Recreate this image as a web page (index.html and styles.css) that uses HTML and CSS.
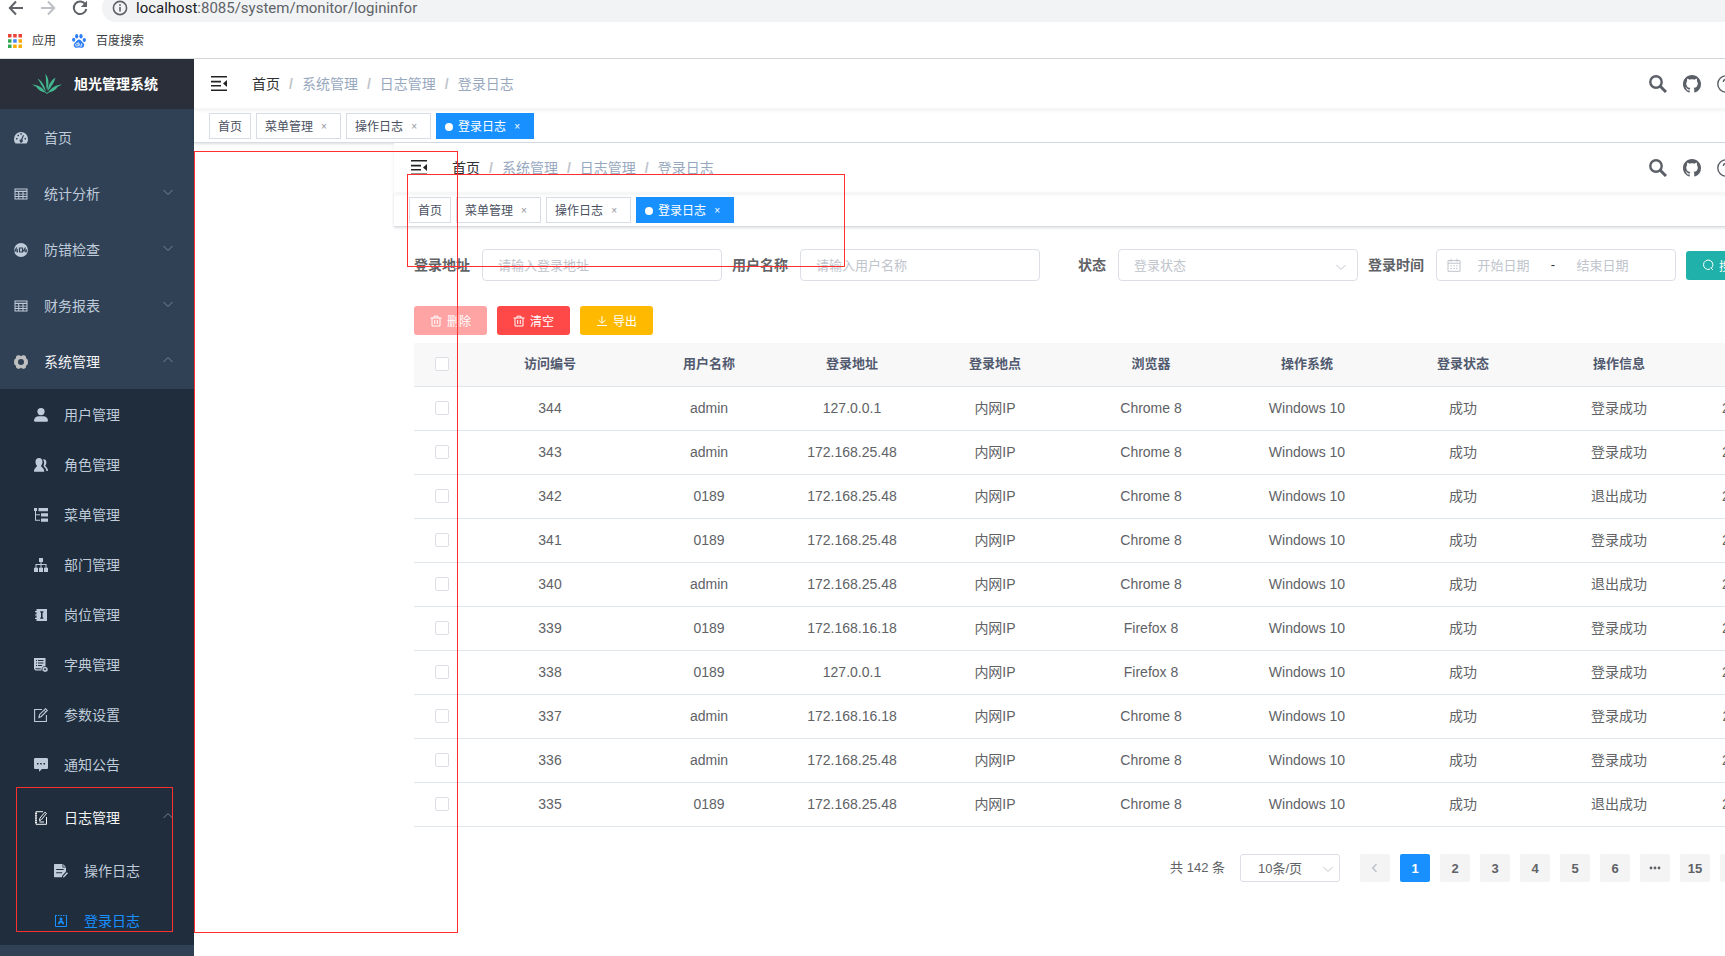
FILE: index.html
```
<!DOCTYPE html>
<html lang="zh-CN">
<head>
    <meta charset="utf-8">
    <title>旭光管理系统</title>
    <link rel="stylesheet" href="styles.css">
</head>
<body>
    <!-- icon set -->
    <svg class="icon-defs" width="0" height="0">
        <symbol id="i-dashboard" viewBox="0 0 14 14"><path fill-rule="evenodd" d="M7 1a7 7 0 0 0-7 7c0 1.800.5 3.200 1.500 4.500h11C13.500 11.200 14 9.800 14 8a7 7 0 0 0-7-7zM2 7h1.500v1.500H2zM3.500 3.700H5v1.500H3.500zM6.300 2.300h1.500v1.500H6.300zM10.500 7H12v1.500h-1.500zM9 4l1 .5-1.700 4.200a1.600 1.600 0 1 1-1.200-.4z"/></symbol>
        <symbol id="i-table" viewBox="0 0 14 14"><path fill-rule="evenodd" d="M.5 1.500h13v11H.5zM1.500 2.500v1.200h11V2.500zM1.500 5v1.700h2.700V5zM5.200 5v1.700h3.300V5zM9.500 5v1.700h3V5zM1.500 7.500v1.600h2.700V7.500zM5.200 7.500v1.600h3.300V7.500zM9.500 7.500v1.600h3V7.500zM1.500 10v1.500h2.700V10zM5.200 10v1.500h3.300V10zM9.500 10v1.500h3V10z"/></symbol>
        <symbol id="i-404" viewBox="0 0 14 14"><circle cx="7" cy="7" r="6.900"/><path d="M2.800 4.500L.8 8h3M3.300 6v3.500M5.500 5h3v4h-3zM11.500 4.500l-2 3.500h3.500M12 6v3.500" fill="none" stroke="#304156" stroke-width="1.200"/></symbol>
        <symbol id="i-system" viewBox="0 0 14 14"><path fill-rule="evenodd" d="M3.800.3h1.600L7 1.200 8.600.3h1.600l1.600 1 .3 1.900 1.500 1.300.4 2.500-.4 2.500-1.500 1.300-.3 1.900-1.600 1H8.600L7 12.800l-1.600.9H3.800l-1.600-1-.3-1.900L.4 9.500 0 7l.4-2.500 1.500-1.300.3-1.900zM7 4a3 3 0 1 0 0 6 3 3 0 0 0 0-6z"/></symbol>
        <symbol id="i-user" viewBox="0 0 14 14"><circle cx="7" cy="3.600" r="3.600"/><path d="M0 12.200C.4 9.500 2.500 8.300 4.500 8.300h5c2 0 4.100 1.200 4.500 3.900 0 1-.7 1.500-2 1.500H2c-1.300 0-2-.5-2-1.500z"/></symbol>
        <symbol id="i-peoples" viewBox="0 0 14 14"><path d="M5 0c2.200 0 3.500 1.600 3.500 3.800 0 1.600-.6 3-1.500 3.900 0 1.300 3.300 2 3.300 6.100H0c0-4.100 3-4.800 3-6.100-1-.9-1.500-2.300-1.500-3.900C1.500 1.600 2.800 0 5 0z"/><path d="M9 1.300c2-.3 3.400 1 3.400 3 0 1.400-.5 2.500-1.200 3.300 0 1.200 2.800 1.800 2.800 5.300h-1.600c-.2-2.600-2.700-3.600-2.900-5.300.9-1.700 1-4.200-.5-6.300z"/></symbol>
        <symbol id="i-tree-table" viewBox="0 0 14 14"><path d="M0 0h3v3H0zM4.500 0H14v3.200H4.500zM7 5.200h7v3.200H7zM7 10.500h7v3.300H7z"/><path d="M1 3h1v9.800H1zM1 6.300h5v1H1zM1 11.800h5v1H1z"/></symbol>
        <symbol id="i-tree" viewBox="0 0 14 14"><path d="M5 0h4v4H5zM6.500 4h1v2h-1zM1.500 6h11v1h-11zM1.500 6h1v4h-1zM6.500 6h1v4h-1zM11.500 6h1v4h-1zM0 9.700h4v4.200H0zM5 9.700h4v4.200H5zM10 9.700h4v4.200h-4z"/></symbol>
        <symbol id="i-post" viewBox="0 0 14 14"><path fill-rule="evenodd" d="M2.500 1H13v12H2.500v-2H1V9.800h1.500V7.600H1V6.400h1.500V4.200H1V3h1.500zM6.200 3.200v1.200h.8v4.800l-.8.6v1h3.200v-1l-.8-.6V4.400h.8V3.200z"/></symbol>
        <symbol id="i-dict" viewBox="0 0 14 14"><path fill-rule="evenodd" d="M0 0h11.500v8a4 4 0 0 0-4 4.500H1.500L0 11zM2 2v1h1V2zM4 2v1h5.500V2zM2 4.500v1h1v-1zM4 4.500v1h5.500v-1zM2 7v1h1V7zM4 7v1h4V7zM1.500 10.200v1h5.200v-1z"/><path fill-rule="evenodd" d="M11 8.500l2.600 1.500v3L11 14l-2.500-1.200v-3zM11 10.300a1 1 0 1 0 0 2 1 1 0 0 0 0-2z"/></symbol>
        <symbol id="i-edit" viewBox="0 0 14 14"><path d="M8 1.500H.6v12h11.800V7M5 9.500l.5-2.800 6-6 1.800 1.800-6 6z" fill="none" stroke="currentColor" stroke-width="1.100"/><path d="M10 2.200l1.800 1.800" stroke="currentColor"/></symbol>
        <symbol id="i-message" viewBox="0 0 14 14"><path fill-rule="evenodd" d="M1.500 0h11C13.500 0 14 .5 14 1.500v8c0 1-.5 1.500-1.500 1.500H8l-3 2.800V11H1.500C.5 11 0 10.500 0 9.500v-8C0 .5.500 0 1.500 0zM3 5v1.500h1.500V5zM6.200 5v1.500h1.500V5zM9.500 5v1.500H11V5z"/></symbol>
        <symbol id="i-log" viewBox="0 0 14 14"><path d="M9 .7H2v12.600h10.500V6M1 2.500h2M1 4.800h2M1 7.100h2M1 9.400h2M1 11.500h2M5.500 9.800l.4-2.600 5-6 1.600 1.300-5 6zM5.500 11h4.500" fill="none" stroke="currentColor"/></symbol>
        <symbol id="i-form" viewBox="0 0 14 14"><path fill-rule="evenodd" d="M1 0h7.500v3.500H12v4L8 12v1.300H1c-.7 0-1-.3-1-1V1C0 .3.300 0 1 0zM2.200 5v1.100h7.500V5zM2.200 8.200v1.100h6V8.200z"/><path d="M9.300.3l2.400 2.400H9.300zM9.200 12.200l3.700-4 1.100 1-3.800 4-1.300.4z"/></symbol>
        <symbol id="i-logininfor" viewBox="0 0 14 14"><path d="M1.500 2v10.500h11V2M1 1.500h2M4 1.500h1.500M6.500 1.500H8M9 1.500h1.500M11.500 1.500H13" fill="none" stroke="currentColor"/><circle cx="7" cy="5" r="1.500"/><path d="M4 10.200c0-2 1.200-3.200 2-3.600h2c.8.400 2 1.600 2 3.600H8.600L7 8.300l-1.600 1.900z"/></symbol>
        <symbol id="i-down" viewBox="0 0 12 12"><path d="M1.500 4L6 8.500 10.500 4" fill="none" stroke="currentColor"/></symbol>
        <symbol id="i-up" viewBox="0 0 12 12"><path d="M1.500 8L6 3.500 10.500 8" fill="none" stroke="currentColor"/></symbol>
        <symbol id="i-fold" viewBox="0 0 18 18"><path d="M1 1h16v1.600H1zM1 5.800h10v1.700H1zM1 9.900h10v1.700H1zM1 14.400h16V16H1zM17 5v7l-4-3.500z"/></symbol>
        <symbol id="i-search" viewBox="0 0 18 18"><circle cx="7" cy="7" r="5.700" fill="none" stroke="currentColor" stroke-width="2.400"/><path d="M11 11l6 6" stroke="currentColor" stroke-width="3"/></symbol>
        <symbol id="i-github" viewBox="0 0 16 16"><path d="M8 0C3.580 0 0 3.580 0 8c0 3.540 2.290 6.530 5.470 7.590.4.070.55-.17.55-.38 0-.19-.01-.82-.01-1.490-2.010.37-2.530-.49-2.690-.94-.09-.23-.48-.94-.82-1.130-.28-.15-.68-.52-.01-.53.63-.01 1.080.58 1.230.82.72 1.210 1.870.87 2.330.66.07-.52.28-.87.51-1.070-1.780-.2-3.640-.89-3.640-3.950 0-.87.31-1.590.82-2.150-.08-.2-.36-1.020.08-2.120 0 0 .67-.21 2.200.82.64-.18 1.320-.27 2-.27s1.360.09 2 .27c1.530-1.040 2.200-.82 2.200-.82.44 1.100.16 1.920.08 2.120.51.56.82 1.270.82 2.150 0 3.070-1.870 3.750-3.650 3.950.29.25.54.73.54 1.480 0 1.070-.01 1.930-.01 2.200 0 .21.15.46.55.38A8.010 8.010 0 0 0 16 8c0-4.420-3.580-8-8-8z"/></symbol>
        <symbol id="i-question" viewBox="0 0 18 18"><g fill="none" stroke="currentColor" stroke-width="1.400"><circle cx="9" cy="9" r="8.200"/><path d="M6.300 7a2.700 2.700 0 1 1 3.800 2.500c-.8.400-1.100.8-1.100 1.800M9 12.800v1.400"/></g></symbol>
        <symbol id="i-delete" viewBox="0 0 12 12"><path d="M.5 3h11M4 3V1.200h4V3M2 3v8h8V3M4.700 5v4M7.300 5v4" fill="none" stroke="currentColor"/></symbol>
        <symbol id="i-download" viewBox="0 0 12 12"><path d="M6 1v7M2.500 5L6 8.300 9.500 5M1 10.500h10" fill="none" stroke="currentColor"/></symbol>
        <symbol id="i-find" viewBox="0 0 12 12"><path d="M9.300 9.300a4.700 4.700 0 1 0-1.300.8M8.600 8.600L11 11" fill="none" stroke="currentColor"/></symbol>
        <symbol id="i-date" viewBox="0 0 14 14"><path d="M1 2.500h12v10.800H1zM1 5.200h12M4 .8v3M10 .8v3M3.500 7.800h1.500M6.300 7.800h1.500M9 7.800h1.500M3.500 10.500h1.500M6.300 10.500h1.500M9 10.500h1.500" fill="none" stroke="currentColor"/></symbol>
    </svg>

    <header class="browser">
        <div class="toolbar">
            <button class="nav-btn" aria-label="后退"><svg viewBox="0 0 16 16"><path d="M15 8H2M8 1.500L1.800 8 8 14.500" fill="none" stroke="currentColor" stroke-width="2"/></svg></button>
            <button class="nav-btn nav-off" aria-label="前进"><svg viewBox="0 0 16 16"><path d="M1 8h13M8 1.500L14.200 8 8 14.500" fill="none" stroke="currentColor" stroke-width="2"/></svg></button>
            <button class="nav-btn" aria-label="刷新"><svg viewBox="0 0 16 16"><path d="M13.500 4.500A6.300 6.300 0 1 0 14.300 9" fill="none" stroke="currentColor" stroke-width="2"/><path d="M15 .8v6.200H8.800z"/></svg></button>
            <div class="address">
                <svg viewBox="0 0 16 16"><circle cx="8" cy="8" r="6.600" fill="none" stroke="currentColor" stroke-width="1.600"/><path d="M7.200 7h1.600v4.500H7.200zM7.200 4.300h1.600v1.600H7.200z"/></svg>
                <span><b>localhost</b>:8085/system/monitor/logininfor</span>
            </div>
        </div>
        <nav class="bookmarks">
            <a href="#">
                <svg viewBox="0 0 14 14"><path fill="#ea4335" d="M0 0h3.500v3.500H0zM5.200 0h3.500v3.500H5.200zM10.500 0H14v3.500h-3.500z"/><path fill="#34a853" d="M0 5.200h3.500v3.500H0zM0 10.500h3.500V14H0z"/><path fill="#4285f4" d="M5.200 5.200h3.500v3.500H5.200z"/><path fill="#fbab05" d="M10.500 5.200H14v3.500h-3.500zM5.200 10.500h3.500V14H5.200zM10.500 10.500H14V14h-3.500z"/></svg>
                应用
            </a>
            <a href="#">
                <svg class="baidu" viewBox="0 0 14 14"><ellipse cx="4.700" cy="2.300" rx="1.600" ry="2.200"/><ellipse cx="9" cy="2.300" rx="1.600" ry="2.200"/><ellipse cx="1.700" cy="5.700" rx="1.600" ry="2"/><ellipse cx="12.300" cy="6" rx="1.600" ry="2"/><path d="M7 5.500c1.700 0 2.200 1.500 3.500 2.700 1.500 1.300 2 2.300 1.600 3.700-.5 1.800-2.300 2-5.100 1.700-2.800.3-4.600.1-5.100-1.700-.4-1.400.1-2.400 1.600-3.700C4.800 7 5.300 5.500 7 5.500z"/><path d="M6.300 8v4H4.700a1 1 0 0 1 0-2.300h1.600M7.700 9.500v2c0 .4.200.6.600.6h1.400V9.500" fill="none" stroke="#fff" stroke-width=".8"/></svg>
                百度搜索
            </a>
        </nav>
    </header>

    <div class="app">
        <aside class="sidebar">
            <a class="logo" href="#">
                <svg viewBox="0 0 30 20"><path d="M13.300 0c3.500 3.500 4.200 9.500 1.700 16.500-1.200-5.500-.5-11-1.700-16.500z"/><path d="M5.500 4.500c4.500 2.500 7.500 7.500 8.300 13C10.500 14 8.500 8.500 5.500 4.500zM23.500 3.500c-1 4.500-4 9-7.800 13.500.5-5.500 3-10.500 7.800-13.500z"/><path d="M0 10.500c6 .3 10.500 3 14 8C9 18 6 15.500 4.500 13zM30 10.500c-6 .3-10.500 3-14 8 5-.5 8-3 9.500-5.500z"/><path d="M4.500 15.500c4 .2 7.500 1.500 10.500 4.500 3-3 6.500-4.300 10.500-4.500-3 .2-7 1-10.500 3.300-3.500-2.300-7.500-3.100-10.500-3.300z"/></svg>
                <span>旭光管理系统</span>
            </a>
            <nav class="menu">
                <a class="menu-item" href="#"><svg><use href="#i-dashboard"/></svg>首页</a>
                <a class="menu-item" href="#"><svg><use href="#i-table"/></svg>统计分析<svg class="arrow"><use href="#i-down"/></svg></a>
                <a class="menu-item" href="#"><svg><use href="#i-404"/></svg>防错检查<svg class="arrow"><use href="#i-down"/></svg></a>
                <a class="menu-item" href="#"><svg><use href="#i-table"/></svg>财务报表<svg class="arrow"><use href="#i-down"/></svg></a>
                <a class="menu-item opened" href="#"><svg class="gear"><use href="#i-system"/></svg>系统管理<svg class="arrow"><use href="#i-up"/></svg></a>
                <div class="submenu">
                    <a class="sub-item" href="#"><svg><use href="#i-user"/></svg>用户管理</a>
                    <a class="sub-item" href="#"><svg><use href="#i-peoples"/></svg>角色管理</a>
                    <a class="sub-item" href="#"><svg><use href="#i-tree-table"/></svg>菜单管理</a>
                    <a class="sub-item" href="#"><svg><use href="#i-tree"/></svg>部门管理</a>
                    <a class="sub-item" href="#"><svg><use href="#i-post"/></svg>岗位管理</a>
                    <a class="sub-item" href="#"><svg><use href="#i-dict"/></svg>字典管理</a>
                    <a class="sub-item" href="#"><svg><use href="#i-edit"/></svg>参数设置</a>
                    <a class="sub-item" href="#"><svg><use href="#i-message"/></svg>通知公告</a>
                    <a class="menu-item nested opened" href="#"><svg><use href="#i-log"/></svg>日志管理<svg class="arrow"><use href="#i-up"/></svg></a>
                    <a class="sub-item third" href="#"><svg><use href="#i-form"/></svg>操作日志</a>
                    <a class="sub-item third active" href="#"><svg><use href="#i-logininfor"/></svg>登录日志</a>
                </div>
            </nav>
            <div class="mark mark-menu"></div>
        </aside>

        <main class="main">
            <div class="page-head">
                <div class="navbar">
                    <button class="fold" aria-label="收起菜单"><svg><use href="#i-fold"/></svg></button>
                    <nav class="breadcrumb"><a href="#">首页</a><i>/</i><span>系统管理</span><i>/</i><span>日志管理</span><i>/</i><span>登录日志</span></nav>
                    <div class="right-menu">
                        <button aria-label="搜索"><svg><use href="#i-search"/></svg></button>
                        <a href="#" aria-label="GitHub"><svg><use href="#i-github"/></svg></a>
                        <a href="#" aria-label="帮助"><svg><use href="#i-question"/></svg></a>
                    </div>
                </div>
                <div class="tags">
                    <a class="tag" href="#">首页</a>
                    <a class="tag" href="#">菜单管理<span class="close">×</span></a>
                    <a class="tag" href="#">操作日志<span class="close">×</span></a>
                    <a class="tag current" href="#">登录日志<span class="close">×</span></a>
                </div>
            </div>

            <div class="inner">
                <div class="page-head">
                    <div class="navbar">
                        <button class="fold" aria-label="收起菜单"><svg><use href="#i-fold"/></svg></button>
                        <nav class="breadcrumb"><a href="#">首页</a><i>/</i><span>系统管理</span><i>/</i><span>日志管理</span><i>/</i><span>登录日志</span></nav>
                        <div class="right-menu">
                            <button aria-label="搜索"><svg><use href="#i-search"/></svg></button>
                            <a href="#" aria-label="GitHub"><svg><use href="#i-github"/></svg></a>
                            <a href="#" aria-label="帮助"><svg><use href="#i-question"/></svg></a>
                        </div>
                    </div>
                    <div class="tags">
                        <a class="tag" href="#">首页</a>
                        <a class="tag" href="#">菜单管理<span class="close">×</span></a>
                        <a class="tag" href="#">操作日志<span class="close">×</span></a>
                        <a class="tag current" href="#">登录日志<span class="close">×</span></a>
                    </div>
                </div>

                <div class="content">
                    <form class="query">
                        <div class="form-item">
                            <label for="ipaddr">登录地址</label>
                            <input class="field" type="text" id="ipaddr" placeholder="请输入登录地址">
                        </div>
                        <div class="form-item">
                            <label for="userName">用户名称</label>
                            <input class="field" type="text" id="userName" placeholder="请输入用户名称">
                        </div>
                        <div class="form-item">
                            <label for="status">状态</label>
                            <div class="select status">
                                <select class="field" id="status">
                                    <option>登录状态</option>
                                </select>
                                <svg><use href="#i-down"/></svg>
                            </div>
                        </div>
                        <div class="form-item">
                            <label for="beginDate">登录时间</label>
                            <div class="field range">
                                <svg><use href="#i-date"/></svg>
                                <input type="text" id="beginDate" placeholder="开始日期">
                                <span>-</span>
                                <input type="text" id="endDate" aria-label="结束日期" placeholder="结束日期">
                            </div>
                        </div>
                        <button class="btn btn-search" type="button"><svg><use href="#i-find"/></svg>搜索</button>
                    </form>

                    <div class="actions">
                        <button class="btn btn-delete" disabled><svg><use href="#i-delete"/></svg>删除</button>
                        <button class="btn btn-clean"><svg><use href="#i-delete"/></svg>清空</button>
                        <button class="btn btn-export"><svg><use href="#i-download"/></svg>导出</button>
                    </div>

                    <table class="list">
                        <colgroup>
                            <col class="col-check"><col class="col-id"><col><col class="col-ip"><col><col><col><col><col><col class="col-time">
                        </colgroup>
                        <thead>
                            <tr><th><input type="checkbox" aria-label="全选"></th><th>访问编号</th><th>用户名称</th><th>登录地址</th><th>登录地点</th><th>浏览器</th><th>操作系统</th><th>登录状态</th><th>操作信息</th><th>登录日期</th></tr>
                        </thead>
                        <tbody>
                            <tr><td><input type="checkbox" aria-label="344"></td><td>344</td><td>admin</td><td>127.0.0.1</td><td>内网IP</td><td>Chrome 8</td><td>Windows 10</td><td>成功</td><td>登录成功</td><td>2020-12-10 10:21:36</td></tr>
                            <tr><td><input type="checkbox" aria-label="343"></td><td>343</td><td>admin</td><td>172.168.25.48</td><td>内网IP</td><td>Chrome 8</td><td>Windows 10</td><td>成功</td><td>登录成功</td><td>2020-12-10 09:58:12</td></tr>
                            <tr><td><input type="checkbox" aria-label="342"></td><td>342</td><td>0189</td><td>172.168.25.48</td><td>内网IP</td><td>Chrome 8</td><td>Windows 10</td><td>成功</td><td>退出成功</td><td>2020-12-10 09:57:55</td></tr>
                            <tr><td><input type="checkbox" aria-label="341"></td><td>341</td><td>0189</td><td>172.168.25.48</td><td>内网IP</td><td>Chrome 8</td><td>Windows 10</td><td>成功</td><td>登录成功</td><td>2020-12-10 09:50:08</td></tr>
                            <tr><td><input type="checkbox" aria-label="340"></td><td>340</td><td>admin</td><td>172.168.25.48</td><td>内网IP</td><td>Chrome 8</td><td>Windows 10</td><td>成功</td><td>退出成功</td><td>2020-12-10 09:49:50</td></tr>
                            <tr><td><input type="checkbox" aria-label="339"></td><td>339</td><td>0189</td><td>172.168.16.18</td><td>内网IP</td><td>Firefox 8</td><td>Windows 10</td><td>成功</td><td>登录成功</td><td>2020-12-10 09:32:27</td></tr>
                            <tr><td><input type="checkbox" aria-label="338"></td><td>338</td><td>0189</td><td>127.0.0.1</td><td>内网IP</td><td>Firefox 8</td><td>Windows 10</td><td>成功</td><td>登录成功</td><td>2020-12-10 09:20:14</td></tr>
                            <tr><td><input type="checkbox" aria-label="337"></td><td>337</td><td>admin</td><td>172.168.16.18</td><td>内网IP</td><td>Chrome 8</td><td>Windows 10</td><td>成功</td><td>登录成功</td><td>2020-12-10 09:11:43</td></tr>
                            <tr><td><input type="checkbox" aria-label="336"></td><td>336</td><td>admin</td><td>172.168.25.48</td><td>内网IP</td><td>Chrome 8</td><td>Windows 10</td><td>成功</td><td>登录成功</td><td>2020-12-10 08:45:31</td></tr>
                            <tr><td><input type="checkbox" aria-label="335"></td><td>335</td><td>0189</td><td>172.168.25.48</td><td>内网IP</td><td>Chrome 8</td><td>Windows 10</td><td>成功</td><td>退出成功</td><td>2020-12-10 08:44:02</td></tr>
                        </tbody>
                    </table>

                    <div class="pagination">
                        <span class="total">共 142 条</span>
                        <div class="select page-size">
                            <select class="field" aria-label="每页条数">
                                <option>10条/页</option>
                            </select>
                            <svg><use href="#i-down"/></svg>
                        </div>
                        <button disabled aria-label="上一页"><svg viewBox="0 0 12 12"><path d="M7.500 2L3.800 6l3.700 4" fill="none" stroke="currentColor" stroke-width="1.600"/></svg></button>
                        <button class="on">1</button>
                        <button>2</button>
                        <button>3</button>
                        <button>4</button>
                        <button>5</button>
                        <button>6</button>
                        <button aria-label="更多"><svg viewBox="0 0 12 12"><circle cx="2" cy="6" r="1.400"/><circle cx="6" cy="6" r="1.400"/><circle cx="10" cy="6" r="1.400"/></svg></button>
                        <button>15</button>
                        <button aria-label="下一页"><svg viewBox="0 0 12 12"><path d="M4.500 2l3.700 4-3.700 4" fill="none" stroke="currentColor" stroke-width="1.600"/></svg></button>
                    </div>
                </div>
            </div>
            <div class="mark mark-gap"></div>
            <div class="mark mark-head"></div>
        </main>
    </div>
</body>
</html>
```
FILE: styles.css
```
* {
    box-sizing: border-box;
}

body {
    margin: 0;
    min-height: 100vh;
    display: flex;
    flex-direction: column;
    overflow: hidden;
    background: #fff;
    color: #606266;
    font: 14px/20px "Liberation Sans", "Noto Sans CJK SC", sans-serif;
}

a {
    color: inherit;
    text-decoration: none;
}

button,
input,
select {
    margin: 0;
    font-family: inherit;
}

svg {
    display: block;
    flex: none;
    fill: currentColor;
}

.icon-defs {
    position: absolute;
}

/* browser bar */
.browser {
    border-bottom: 1px solid #dadce0;
}

.toolbar {
    display: flex;
    align-items: center;
    gap: 16px;
    height: 28px;
    margin-top: -6px;
    padding-left: 8px;
    color: #5f6368;
}

.nav-btn {
    padding: 0;
    border: 0;
    background: none;
    color: #5f6368;
}

.nav-off {
    color: #bdc0c4;
}

.toolbar svg {
    width: 16px;
    height: 16px;
}

.address {
    flex: 1;
    display: flex;
    align-items: center;
    gap: 8px;
    height: 28px;
    margin-left: -2px;
    padding-left: 10px;
    border-radius: 14px 0 0 14px;
    background: #f1f3f4;
    font: 15px/20px Roboto, sans-serif;
}

.address b {
    color: #202124;
    font-weight: normal;
}

.bookmarks {
    display: flex;
    align-items: center;
    gap: 16px;
    height: 36px;
    padding: 2px 0 0 8px;
    color: #3c4043;
    font-size: 12px;
}

.bookmarks a {
    display: flex;
    align-items: center;
    gap: 10px;
}

.bookmarks svg {
    width: 14px;
    height: 14px;
}

.bookmarks .baidu {
    color: #2d7df6;
}

/* sidebar */
.app {
    flex: 1;
    display: flex;
}

.sidebar {
    position: relative;
    flex: none;
    width: 194px;
    background: #304156;
    color: #bfcbd9;
}

.logo {
    display: flex;
    align-items: center;
    justify-content: center;
    gap: 12px;
    height: 50px;
    padding-right: 4px;
    background: #2b2f3a;
    color: #fff;
    font-weight: bold;
}

.logo svg {
    width: 30px;
    height: 20px;
    color: #43b78f;
}

.menu-item,
.sub-item {
    display: flex;
    align-items: center;
    gap: 16px;
    height: 56px;
    padding: 1px 20px 0 14px;
}

.menu-item svg,
.sub-item svg {
    width: 14px;
    height: 14px;
}

.menu-item .arrow {
    width: 12px;
    height: 12px;
    margin-bottom: 4px;
    margin-left: auto;
    color: #7b828c;
}

.opened {
    color: #f4f4f5;
}

.gear {
    color: #bfbfbf;
}

.submenu {
    background: #1f2d3d;
}

.sub-item {
    height: 50px;
}

.sub-item,
.nested {
    padding-left: 34px;
}

.third {
    padding-left: 54px;
}

.active {
    color: #1890ff;
}

/* page head, shown by the outer and the inner layout */
.main {
    position: relative;
    flex: 1;
    min-width: 0;
    margin-right: -172px;
}

.page-head {
    background: #fff;
}

.navbar {
    display: flex;
    align-items: center;
    height: 50px;
    padding: 0 154px 0 16px;
    box-shadow: 0 1px 4px rgba(0, 21, 41, 0.08);
}

.fold {
    padding: 0;
    border: 0;
    background: none;
    color: #222;
}

.fold svg {
    width: 18px;
    height: 18px;
}

.breadcrumb {
    margin-left: 24px;
    color: #97a8be;
}

.breadcrumb a {
    color: #303133;
}

.breadcrumb i {
    margin: 0 9px;
    color: #c0c4cc;
    font-weight: bold;
    font-style: normal;
}

.right-menu {
    display: flex;
    margin-left: auto;
}

.right-menu button,
.right-menu a {
    padding: 0 8px;
    border: 0;
    background: none;
    color: #5a5e66;
}

.right-menu svg {
    width: 18px;
    height: 18px;
}

.tags {
    display: flex;
    gap: 5px;
    height: 34px;
    padding: 4px 15px 0;
    border-bottom: 1px solid #d8dce5;
    box-shadow: 0 1px 3px rgba(0, 0, 0, 0.12), 0 0 3px rgba(0, 0, 0, 0.04);
}

.tag {
    display: flex;
    align-items: center;
    height: 26px;
    padding: 1px 8px 0;
    border: 1px solid #d8dce5;
    background: #fff;
    color: #495060;
    font-size: 12px;
}

.tag .close {
    width: 16px;
    margin-left: 3px;
    color: #909399;
    font-size: 10px;
    text-align: center;
}

.current {
    border-color: #1890ff;
    background: #1890ff;
    color: #fff;
}

.current::before {
    content: "";
    width: 8px;
    height: 8px;
    margin-right: 5px;
    border-radius: 50%;
    background: #fff;
}

.current .close {
    color: #fff;
}

.inner {
    margin-left: 200px;
}

.content {
    padding: 22px 20px;
}

/* query form */
.query {
    display: flex;
    align-items: center;
    gap: 10px;
    margin-bottom: 25px;
}

.form-item {
    display: flex;
    align-items: center;
}

.form-item label {
    width: 68px;
    padding-right: 12px;
    font-weight: bold;
    text-align: right;
}

.field {
    width: 240px;
    height: 32px;
    padding: 0 15px;
    border: 1px solid #dcdfe6;
    border-radius: 4px;
    background: #fff;
    color: #606266;
    font-size: 13px;
}

::placeholder {
    color: #c0c4cc;
    opacity: 1;
}

.select {
    position: relative;
}

.select select {
    appearance: none;
}

.status select {
    color: #c0c4cc;
}

.select svg {
    position: absolute;
    right: 11px;
    top: 12px;
    width: 12px;
    height: 12px;
    color: #c0c4cc;
    pointer-events: none;
}

.range {
    display: flex;
    align-items: center;
    padding: 0 10px;
    color: #303133;
}

.range svg {
    width: 14px;
    height: 14px;
    color: #c0c4cc;
}

.range input {
    width: 85px;
    padding: 0;
    border: 0;
    background: none;
    font-size: 13px;
    text-align: center;
}

.range span {
    width: 14px;
    text-align: center;
}

/* buttons */
.actions {
    display: flex;
    gap: 10px;
    margin-bottom: 8px;
}

.btn {
    display: flex;
    flex: none;
    align-items: center;
    gap: 5px;
    height: 29px;
    padding: 0 16px;
    border: 0;
    border-radius: 3px;
    color: #fff;
    font-size: 12px;
}

.btn svg {
    width: 12px;
    height: 12px;
}

.btn-search {
    background: #20b2aa;
}

.btn-delete {
    background: #ffa4a4;
}

.btn-clean {
    background: #ff4949;
}

.btn-export {
    background: #ffba00;
}

/* table */
.list {
    width: 100%;
    table-layout: fixed;
    border-collapse: separate;
    border-spacing: 0;
}

.list th,
.list td {
    height: 44px;
    padding: 0 0 2px;
    border-bottom: 1px solid #dfe6ec;
    text-align: center;
}

.list th {
    background: #f8f8f9;
    color: #515a6e;
    font-size: 13px;
}

.col-check {
    width: 55px;
}

.col-id {
    width: 162px;
}

.col-ip {
    width: 130px;
}

.col-time {
    width: 180px;
}

.list input {
    display: block;
    width: 14px;
    height: 14px;
    margin: 0 auto;
    appearance: none;
    border: 1px solid #dcdfe6;
    border-radius: 2px;
    background: #fff;
}

/* pagination */
.pagination {
    display: flex;
    justify-content: flex-end;
    align-items: center;
    gap: 10px;
    padding: 27px 127px 0 0;
    font-size: 13px;
}

.total {
    margin-right: 5px;
}

.page-size {
    margin-right: 10px;
}

.page-size .field {
    display: block;
    width: 100px;
    height: 28px;
    padding: 0 17px;
    border-radius: 3px;
}

.page-size svg {
    right: 6px;
    top: 9px;
}

.pagination button {
    display: flex;
    align-items: center;
    justify-content: center;
    width: 30px;
    height: 28px;
    padding: 0;
    border: 0;
    border-radius: 2px;
    background: #f4f4f5;
    color: #606266;
    font-size: 13px;
    font-weight: bold;
}

.pagination button svg {
    width: 12px;
    height: 12px;
}

.pagination button:disabled {
    color: #c0c4cc;
}

.pagination .on {
    background: #1890ff;
    color: #fff;
}

/* red marker frames drawn over the page */
.mark {
    position: absolute;
    border: 1px solid #ff2f2f;
    pointer-events: none;
}

.mark-menu {
    left: 16px;
    top: 728px;
    width: 157px;
    height: 145px;
}

.mark-gap {
    left: 0;
    top: 92px;
    width: 264px;
    height: 782px;
}

.mark-head {
    left: 213px;
    top: 115px;
    width: 438px;
    height: 93px;
}
```
